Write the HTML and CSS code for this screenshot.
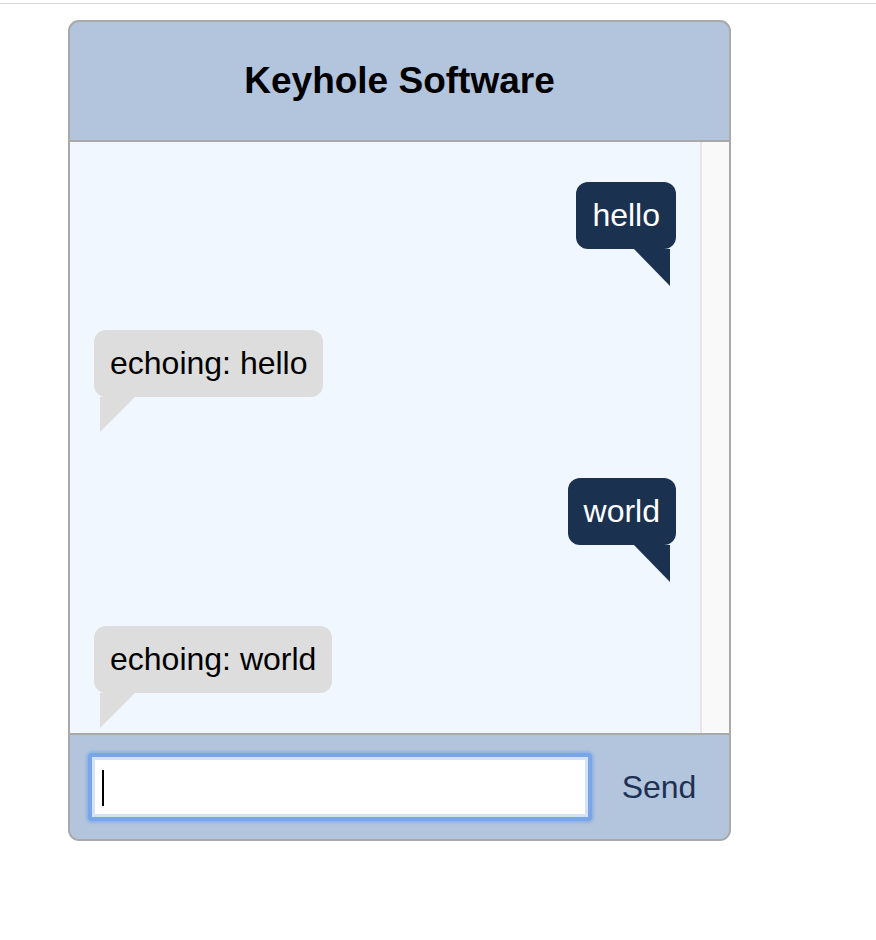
FILE: index.html
```html
<!DOCTYPE html>
<html>
<head>
<meta charset="utf-8">
<link rel="stylesheet" href="styles.css">
</head>
<body>
<div class="topline"></div>
<div class="chat">
  <div class="chat-header">Keyhole Software</div>
  <div class="chat-body">
    <div class="messages">
      <div class="msg msg-out"><div class="bubble">hello</div></div>
      <div class="msg msg-in"><div class="bubble">echoing: hello</div></div>
      <div class="msg msg-out"><div class="bubble">world</div></div>
      <div class="msg msg-in"><div class="bubble">echoing: world</div></div>
    </div>
    <div class="scrolltrack"></div>
  </div>
  <div class="chat-footer">
    <div class="input-wrap">
      <input class="msg-input" type="text">
      <span class="caret"></span>
    </div>
    <button class="send">Send</button>
  </div>
</div>
</body>
</html>
```
FILE: styles.css
```css
html, body {
  margin: 0;
  padding: 0;
  background: #ffffff;
  font-family: "Liberation Sans", Arial, Helvetica, sans-serif;
}
.topline {
  height: 3px;
  border-bottom: 1px solid #dcdcdc;
}
.chat {
  margin: 16px 0 0 68px;
  width: 659px;
  border: 2px solid #a9a9a9;
  border-radius: 11px;
  overflow: hidden;
  background: #b3c4dd;
}
.chat-header {
  height: 118px;
  display: flex;
  align-items: center;
  justify-content: center;
  font-size: 37px;
  font-weight: bold;
  color: #000;
  border-bottom: 2px solid #a9a9a9;
}
.chat-body {
  height: 591px;
  display: flex;
  background: #f0f7fe;
  border-bottom: 2px solid #a9a9a9;
}
.messages {
  flex: 1;
  overflow: hidden;
  padding: 40px 24px 0 24px;
  display: flex;
  flex-direction: column;
}
.scrolltrack {
  width: 27px;
  background: #f9f9f9;
  border-left: 2px solid #e6e6e6;
}
.msg {
  display: flex;
  margin-bottom: 45px;
}
.msg-out { justify-content: flex-end; }
.msg-in { justify-content: flex-start; }
.bubble {
  position: relative;
  font-size: 32px;
  line-height: 37px;
  padding: 15px 16px 15px 16px;
  border-radius: 12px;
  margin-bottom: 36px;
}
.msg-out .bubble {
  background: #1b3150;
  color: #ffffff;
}
.msg-in .bubble {
  background: #dddddd;
  color: #000000;
}
.bubble::after {
  content: "";
  position: absolute;
  top: 100%;
  width: 0;
  height: 0;
}
.msg-out .bubble::after {
  right: 6px;
  border-top: 37px solid #1b3150;
  border-left: 36px solid transparent;
}
.msg-in .bubble::after {
  left: 6px;
  border-top: 35px solid #dddddd;
  border-right: 35px solid transparent;
}
.chat-footer {
  height: 104px;
  display: flex;
  align-items: center;
  padding: 0 0 0 18px;
  background: #b3c4dd;
}
.input-wrap {
  position: relative;
  width: 504px;
  height: 68px;
}
.msg-input {
  box-sizing: border-box;
  width: 100%;
  height: 100%;
  margin: 0;
  border: 4px solid #79a6e9;
  border-radius: 4px;
  box-shadow: 0 0 2px 2px rgba(122, 165, 232, 0.55), inset 0 0 0 3px #d3e2f7;
  background: #ffffff;
  outline: none;
  font-size: 32px;
  font-family: "Liberation Sans", Arial, sans-serif;
}
.caret {
  position: absolute;
  left: 14px;
  top: 17px;
  width: 2px;
  height: 36px;
  background: #000;
}
.send {
  flex: 1;
  background: transparent;
  border: none;
  padding: 0 3px 0 0;
  font-family: "Liberation Sans", Arial, sans-serif;
  font-size: 32px;
  color: #1d3252;
  text-align: center;
}
```
